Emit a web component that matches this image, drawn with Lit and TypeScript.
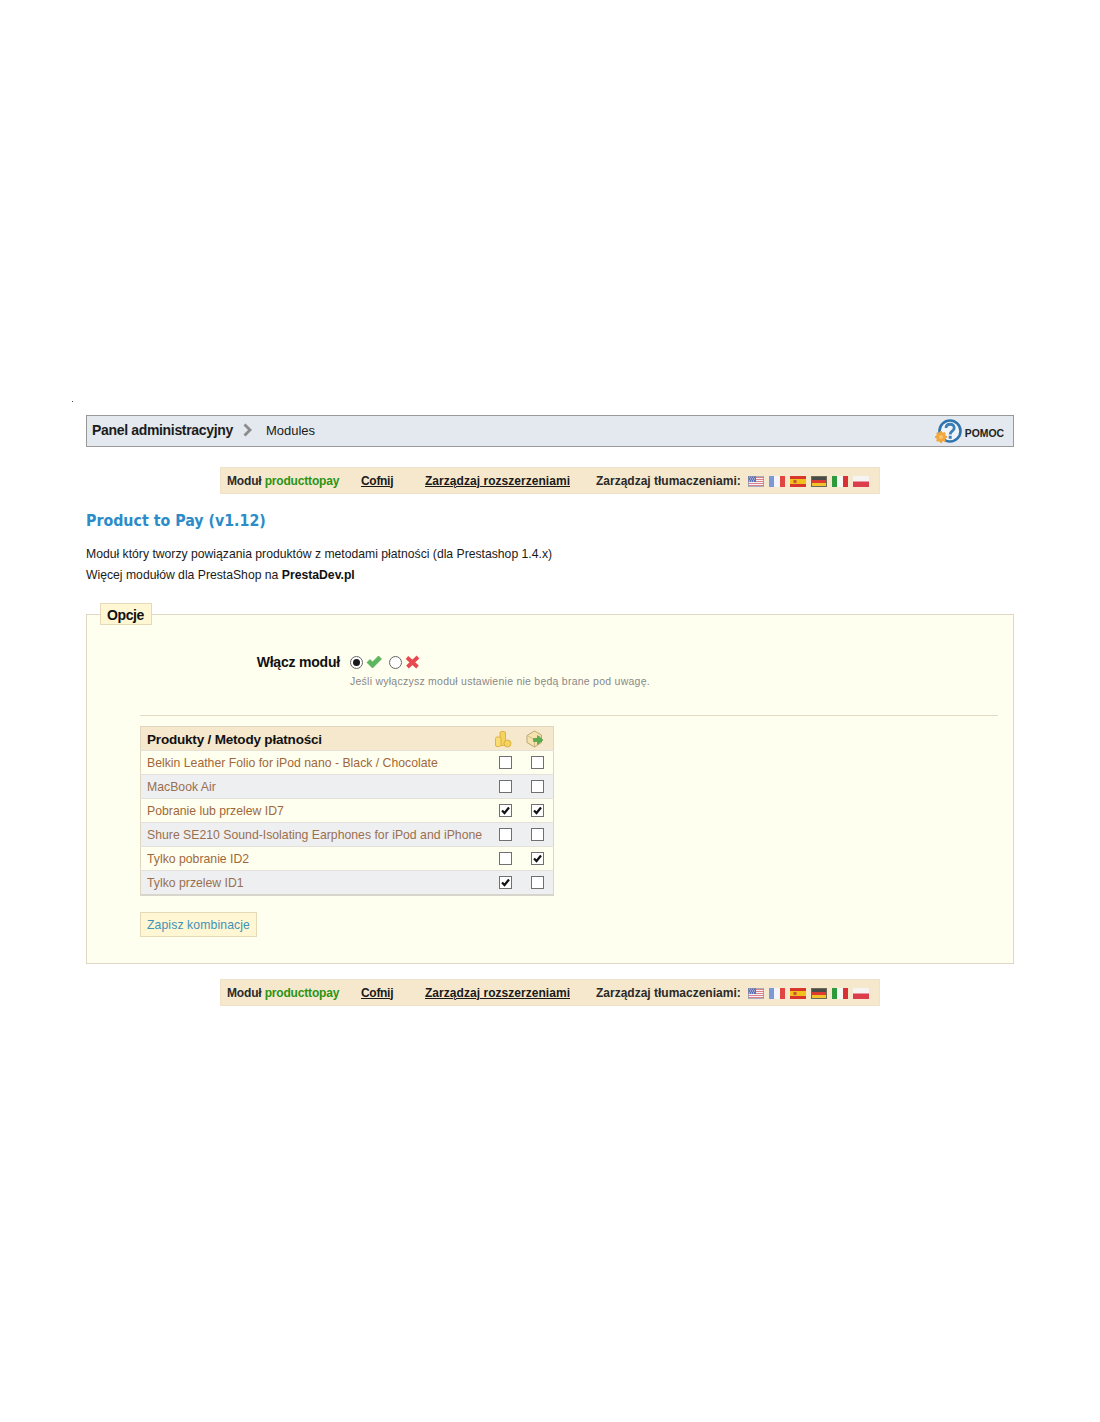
import { LitElement, html, css, svg } from "lit";
import { customElement } from "lit/decorators.js";

const products = [
  { name: "Belkin Leather Folio for iPod nano - Black / Chocolate", a: false, b: false },
  { name: "MacBook Air", a: false, b: false },
  { name: "Pobranie lub przelew ID7", a: true, b: true },
  { name: "Shure SE210 Sound-Isolating Earphones for iPod and iPhone", a: false, b: false },
  { name: "Tylko pobranie ID2", a: false, b: true },
  { name: "Tylko przelew ID1", a: true, b: false },
];

const flagUs = svg`
  <rect width="16" height="11" fill="#f3f3f6"/>
  <path d="M0 1.500h16M0 3.500h16M0 5.500h16M0 7.500h16M0 9.500h16" stroke="#d9818a" stroke-width="1"/>
  <rect width="8" height="6" fill="#5a6fb5"/>
  <path d="M1 1h1M3 1h1M5 1h1M2 3h1M4 3h1M6 3h1M1 5h1M3 5h1M5 5h1" stroke="#fff" stroke-width=".8"/>
  <rect x=".5" y=".5" width="15" height="10" fill="none" stroke="#8a8fa8" stroke-width="1" opacity=".7"/>`;
const flagFr = svg`
  <rect width="16" height="11" fill="#f4f5fa"/>
  <rect width="5" height="11" fill="#7b98dc"/>
  <rect x="11" width="5" height="11" fill="#e0453f"/>`;
const flagEs = svg`
  <rect width="16" height="11" fill="#f2c01e"/>
  <rect width="16" height="3" fill="#d8362a"/>
  <rect y="8" width="16" height="3" fill="#d8362a"/>
  <rect x="3.500" y="4" width="3" height="3" fill="#c2572a"/>`;
const flagDe = svg`
  <rect width="16" height="11" fill="#dd3a30"/>
  <rect width="16" height="4" fill="#4a4a48"/>
  <rect y="7" width="16" height="4" fill="#f0c22c"/>
  <rect x=".5" y=".5" width="15" height="10" fill="none" stroke="#6d6a55" stroke-width="1"/>`;
const flagIt = svg`
  <rect width="16" height="11" fill="#f5f7f2"/>
  <rect width="5" height="11" fill="#2f9a3c"/>
  <rect x="11" width="5" height="11" fill="#dc2f35"/>`;
const flagPl = svg`
  <rect width="16" height="11" fill="#f5f3f3"/>
  <rect y="5.500" width="16" height="5.500" fill="#dc3d4c"/>`;
const flags = [flagUs, flagFr, flagEs, flagDe, flagIt, flagPl];

@customElement("app-root")
export class AppRoot extends LitElement {
  static styles = css`
    :host {
      display: block;
      min-height: 1422px;
      background: #fff;
      font-family: "Liberation Sans", Arial, sans-serif;
      font-size: 12px;
      color: #1a1a1a;
    }
    .speck {
      position: absolute;
      left: 72px;
      top: 401px;
      width: 1px;
      height: 1px;
      background: #444;
    }
    .page {
      width: 928px;
      margin-left: 86px;
      padding-top: 415px;
    }
    .crumbs {
      box-sizing: border-box;
      height: 32px;
      display: flex;
      align-items: center;
      padding: 0 9px 2px 5px;
      background: #e3e9ee;
      border: 1px solid #999;
    }
    .crumbs b {
      font-size: 14px;
      letter-spacing: -0.33px;
      color: #1c1c1c;
    }
    .crumbs .chevron {
      margin: 0 14px 0 10px;
    }
    .crumbs .page-name {
      font-size: 13px;
      flex: 1;
    }
    .help {
      display: flex;
      align-items: center;
      gap: 3px;
      margin-top: 2px;
      font-size: 10.4px;
      font-weight: bold;
      color: #222;
    }
    .help span {
      margin-top: 4px;
    }
    .toolbar {
      box-sizing: border-box;
      width: 660px;
      height: 27px;
      margin: 20px auto 0;
      padding: 0 0 0 6px;
      display: flex;
      align-items: center;
      background: #f6e8cd;
      border: 1px solid #efe2c8;
      font-weight: bold;
      color: #2a2a2a;
      white-space: nowrap;
    }
    .toolbar .module {
      width: 134px;
      letter-spacing: -0.17px;
    }
    .toolbar em {
      font-style: normal;
      color: #2a9415;
    }
    .toolbar a {
      color: #1a1a1a;
      text-decoration: underline;
    }
    .toolbar .back {
      width: 64px;
      letter-spacing: -0.3px;
    }
    .toolbar .manage {
      width: 171px;
      letter-spacing: 0.04px;
    }
    .toolbar .translate {
      width: 152px;
    }
    .flags {
      display: flex;
      gap: 5px;
      margin-top: 2px;
    }
    .flags svg {
      display: block;
    }
    h2 {
      margin: 17px 0 0;
      height: 20px;
      font-family: "DejaVu Sans Condensed", "DejaVu Sans", sans-serif;
      font-stretch: condensed;
      font-size: 15.8px;
      line-height: 20px;
      font-weight: bold;
      color: #2b8cc9;
    }
    .intro {
      margin: 13px 0 0;
      font-size: 12.2px;
      line-height: 21px;
      color: #1a1a1a;
    }
    .intro b {
      color: #111;
    }
    fieldset {
      box-sizing: border-box;
      height: 361px;
      margin: 17px 0 0;
      padding: 0 15px 0 13px;
      min-width: 0;
      background: #ffffef;
      border: 1px solid #dfd7c4;
    }
    legend {
      box-sizing: border-box;
      height: 22px;
      margin-bottom: -2px;
      padding: 0 7px 0 6px;
      line-height: 22px;
      background: #fff6d4;
      border: 1px solid #e6d9b8;
      font-size: 14px;
      letter-spacing: -0.4px;
      font-weight: bold;
      color: #111;
    }
    .body {
      padding-left: 40px;
    }
    .enable {
      display: flex;
      padding-top: 29px;
      height: 63px;
      border-bottom: 1px solid #e2dcc3;
    }
    .enable label {
      width: 210px;
      padding-right: 10px;
      box-sizing: border-box;
      text-align: right;
      font-size: 14px;
      letter-spacing: -0.2px;
      font-weight: bold;
      line-height: 20px;
      color: #111;
    }
    .choices {
      display: flex;
      align-items: center;
      height: 20px;
    }
    .radio {
      box-sizing: border-box;
      width: 13px;
      height: 13px;
      border: 1px solid #666;
      border-radius: 50%;
      background: #fff;
      display: flex;
      align-items: center;
      justify-content: center;
      margin-right: 3px;
    }
    .radio.on::after {
      content: "";
      width: 7px;
      height: 7px;
      border-radius: 50%;
      background: #1a1a1a;
    }
    .choices svg {
      display: block;
      margin-right: 7px;
    }
    .hint {
      margin-top: 3px;
      font-size: 10.5px;
      letter-spacing: 0.25px;
      color: #888;
    }
    table {
      border-collapse: collapse;
      width: 414px;
      margin-top: 10px;
      border: 1px solid #dfd5c0;
      border-bottom: 2px solid #d8d5cc;
    }
    th {
      height: 21px;
      padding: 2px 0 0 6px;
      background: #f6e8cd;
      text-align: left;
      font-size: 13.5px;
      letter-spacing: -0.19px;
      color: #111;
    }
    th.icon,
    td.box {
      width: 32px;
      padding: 0;
    }
    th.icon svg {
      display: block;
      margin: 0 0 0 5px;
    }
    td {
      height: 23px;
      padding: 0 0 0 6px;
      border-top: 1px solid #e4e1d8;
      font-size: 12.25px;
      color: #a0683a;
      white-space: nowrap;
    }
    tr.alt td {
      background: #eeeff1;
      color: #996f50;
    }
    .check {
      box-sizing: border-box;
      display: block;
      width: 13px;
      height: 13px;
      margin: 0 auto;
      border: 1px solid #707070;
      background: #fff;
    }
    .check svg {
      display: block;
    }
    .save {
      box-sizing: border-box;
      display: inline-block;
      height: 25px;
      margin-top: 16px;
      padding: 0 6px;
      line-height: 24px;
      font-size: 12.2px;
      letter-spacing: 0.12px;
      background: #fff6d4;
      border: 1px solid #e6d9b8;
      color: #3f92b5;
    }
    .page > .toolbar:last-child {
      margin-top: 15px;
    }
  `;

  private toolbar() {
    return html`
      <div class="toolbar">
        <span class="module">Moduł <em>producttopay</em></span>
        <span class="back"><a href="#">Cofnij</a></span>
        <span class="manage"><a href="#">Zarządzaj rozszerzeniami</a></span>
        <span class="translate">Zarządzaj tłumaczeniami:</span>
        <span class="flags">
          ${flags.map(
            (f) => html`<svg width="16" height="11" viewBox="0 0 16 11">${f}</svg>`
          )}
        </span>
      </div>
    `;
  }

  private checkbox(on: boolean) {
    return html`<span class="check">
      ${on
        ? html`<svg width="11" height="11" viewBox="0 0 11 11">
            <path d="M2 5.500 4.500 8 9 2.500" fill="none" stroke="#111" stroke-width="2.200"/>
          </svg>`
        : ""}
    </span>`;
  }

  render() {
    return html`
      <div class="speck"></div>
      <div class="page">
        <div class="crumbs">
          <b>Panel administracyjny</b>
          <svg class="chevron" width="9" height="14" viewBox="0 0 9 14">
            <path d="M1.500 1.500 7 7l-5.500 5.500" fill="none" stroke="#8b8b8b" stroke-width="2.800"/>
          </svg>
          <span class="page-name">Modules</span>
          <div class="help">
            <svg width="27" height="25" viewBox="0 0 27 25">
              <circle cx="15" cy="12" r="10.500" fill="#eef4f9" stroke="#2f74ad" stroke-width="2.600"/>
              <path d="M11 9c.3-5 8.200-5 8.200 0 0 3.400-4 3-4 6.400" fill="none" stroke="#3d7fb5" stroke-width="2.800"/>
              <rect x="13.700" y="16.800" width="3" height="3" fill="#3d7fb5"/>
              <circle cx="6" cy="18" r="5" fill="#f2a73c"/>
              <path d="M6 12v12M0 18h12M1.800 13.800l8.400 8.400M10.200 13.800l-8.400 8.400" stroke="#f2a73c" stroke-width="2"/>
              <circle cx="6" cy="18" r="2" fill="#f7c56f"/>
            </svg>
            <span>POMOC</span>
          </div>
        </div>

        ${this.toolbar()}

        <h2>Product to Pay (v1.12)</h2>
        <p class="intro">
          Moduł który tworzy powiązania produktów z metodami płatności (dla Prestashop 1.4.x)<br />
          Więcej modułów dla PrestaShop na <b>PrestaDev.pl</b>
        </p>

        <fieldset>
          <legend>Opcje</legend>
          <div class="body">
            <div class="enable">
              <label>Włącz moduł</label>
              <div>
                <div class="choices">
                  <span class="radio on"></span>
                  <svg width="16" height="14" viewBox="0 0 16 14">
                    <path d="M1 7.500 4 4.500l2.500 2.500L12.500 1 15.500 4 6.500 13z" fill="#5cb85c" stroke="#4b9a50" stroke-width=".6"/>
                  </svg>
                  <span class="radio"></span>
                  <svg width="15" height="14" viewBox="0 0 15 14">
                    <path d="M2 2.500 12.500 12M13 2 2.500 12" fill="none" stroke="#e8474d" stroke-width="3.800"/>
                  </svg>
                </div>
                <div class="hint">Jeśli wyłączysz moduł ustawienie nie będą brane pod uwagę.</div>
              </div>
            </div>

            <table>
              <tr>
                <th>Produkty / Metody płatności</th>
                <th class="icon">
                  <svg width="18" height="18" viewBox="0 0 18 18">
                    <rect x="6" y="1.500" width="5.500" height="14" rx="1.500" fill="#f4d35e" stroke="#d9a632" stroke-width=".8"/>
                    <rect x="1.500" y="7" width="5.500" height="9.500" rx="1.500" fill="#f7dd72" stroke="#d9a632" stroke-width=".8"/>
                    <circle cx="13.500" cy="13.500" r="3.500" fill="#f4d35e" stroke="#d9a632" stroke-width=".8"/>
                  </svg>
                </th>
                <th class="icon">
                  <svg width="18" height="18" viewBox="0 0 18 18">
                    <path d="M1 5.500 8.500 1l7 4v7.500l-7 4.500-7.500-4.500z" fill="#f6e2ad" stroke="#b6a26b" stroke-width=".9"/>
                    <path d="M1 5.500 8.500 9.500l7-4M8.500 9.500V17" fill="none" stroke="#c9b57e" stroke-width=".8"/>
                    <path d="M7.500 8.500h4V5.500L17 10l-5.500 4.500v-3h-4z" fill="#59ad4c" stroke="#3f8a3a" stroke-width=".5"/>
                  </svg>
                </th>
              </tr>
              ${products.map(
                (p, i) => html`
                  <tr class=${i % 2 ? "alt" : ""}>
                    <td>${p.name}</td>
                    <td class="box">${this.checkbox(p.a)}</td>
                    <td class="box">${this.checkbox(p.b)}</td>
                  </tr>
                `
              )}
            </table>

            <div class="save">Zapisz kombinacje</div>
          </div>
        </fieldset>

        ${this.toolbar()}
      </div>
    `;
  }
}
